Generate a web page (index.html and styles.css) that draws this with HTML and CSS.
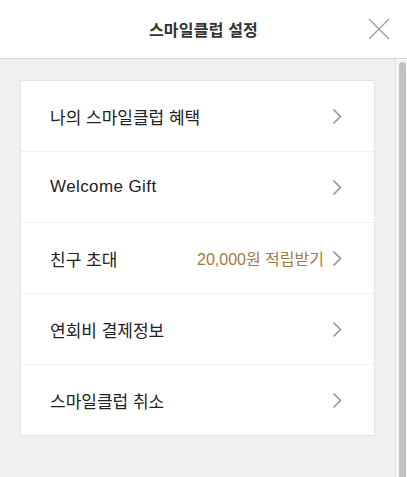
FILE: index.html
```html
<!DOCTYPE html>
<html lang="ko">
<head>
<meta charset="utf-8">
<title>스마일클럽 설정</title>
<link rel="stylesheet" href="styles.css">
</head>
<body>
<div class="layer">
  <header class="header">
    <h1 class="title">스마일클럽 설정</h1>
    <button class="close" aria-label="닫기">
      <svg width="22" height="22" viewBox="0 0 22 22"><path d="M1 1L21 21M21 1L1 21" stroke="#9a9a9a" stroke-width="1.2" fill="none"/></svg>
    </button>
  </header>
  <div class="body">
    <div class="content">
      <ul class="menu">
        <li class="item"><span class="label">나의 스마일클럽 혜택</span><svg class="arrow" width="10" height="17" viewBox="0 0 10 17"><polyline points="1.5,1.5 8.5,8.5 1.5,15.5" fill="none" stroke="#999" stroke-width="1.7"/></svg></li>
        <li class="item"><span class="label latin">Welcome Gift</span><svg class="arrow" width="10" height="17" viewBox="0 0 10 17"><polyline points="1.5,1.5 8.5,8.5 1.5,15.5" fill="none" stroke="#999" stroke-width="1.7"/></svg></li>
        <li class="item"><span class="label">친구 초대</span><span class="extra">20,000원 적립받기</span><svg class="arrow" width="10" height="17" viewBox="0 0 10 17"><polyline points="1.5,1.5 8.5,8.5 1.5,15.5" fill="none" stroke="#999" stroke-width="1.7"/></svg></li>
        <li class="item"><span class="label">연회비 결제정보</span><svg class="arrow" width="10" height="17" viewBox="0 0 10 17"><polyline points="1.5,1.5 8.5,8.5 1.5,15.5" fill="none" stroke="#999" stroke-width="1.7"/></svg></li>
        <li class="item"><span class="label">스마일클럽 취소</span><svg class="arrow" width="10" height="17" viewBox="0 0 10 17"><polyline points="1.5,1.5 8.5,8.5 1.5,15.5" fill="none" stroke="#999" stroke-width="1.7"/></svg></li>
      </ul>
    </div>
    <div class="scrollbar"><div class="thumb"></div></div>
  </div>
</div>
</body>
</html>
```
FILE: styles.css
```css
* { box-sizing: border-box; }
html, body { margin: 0; padding: 0; height: 100%; overflow: hidden; }
body {
  font-family: "Liberation Sans", "Noto Sans CJK KR", sans-serif;
  color: #222;
  background: #fff;
}
.layer {
  display: flex;
  flex-direction: column;
  height: 477px;
}
.header {
  position: relative;
  height: 59px;
  flex: none;
  display: flex;
  align-items: center;
  justify-content: center;
  border-bottom: 1px solid #d6d6d6;
  background: #fff;
}
.title {
  margin: 0;
  font-size: 16px;
  font-weight: bold;
  color: #333;
  letter-spacing: 0.2px;
}
.close {
  position: absolute;
  right: 17px;
  top: 18px;
  width: 22px;
  height: 22px;
  padding: 0;
  border: 0;
  background: none;
  display: block;
}
.close svg { display: block; }
.body {
  flex: 1;
  display: flex;
  min-height: 0;
  background: #f0f0f0;
}
.content {
  flex: 1;
  padding: 21px 20px 0 20px;
}
.scrollbar {
  width: 12px;
  flex: none;
  background: #f5f5f5;
  border-left: 1px solid #e2e2e2;
  padding: 3px 1px 0 3px;
}
.thumb {
  height: 100%;
  background: #c1c1c1;
  border-radius: 4px 4px 0 0;
}
.menu {
  list-style: none;
  margin: 0;
  padding: 0;
  background: #fff;
  border: 1px solid #e4e4e4;
}
.item {
  height: 71px;
  display: flex;
  align-items: center;
  padding: 0 32px 0 29px;
  border-top: 1px solid #efefef;
  font-size: 17px;
}
.item:first-child { border-top: 0; height: 70px; }
.label { flex: 1; color: #222; }
.latin { letter-spacing: 0.4px; }
.extra {
  color: #a27a45;
  font-size: 16px;
  margin-right: 8px;
}
.arrow { display: block; flex: none; }
```
